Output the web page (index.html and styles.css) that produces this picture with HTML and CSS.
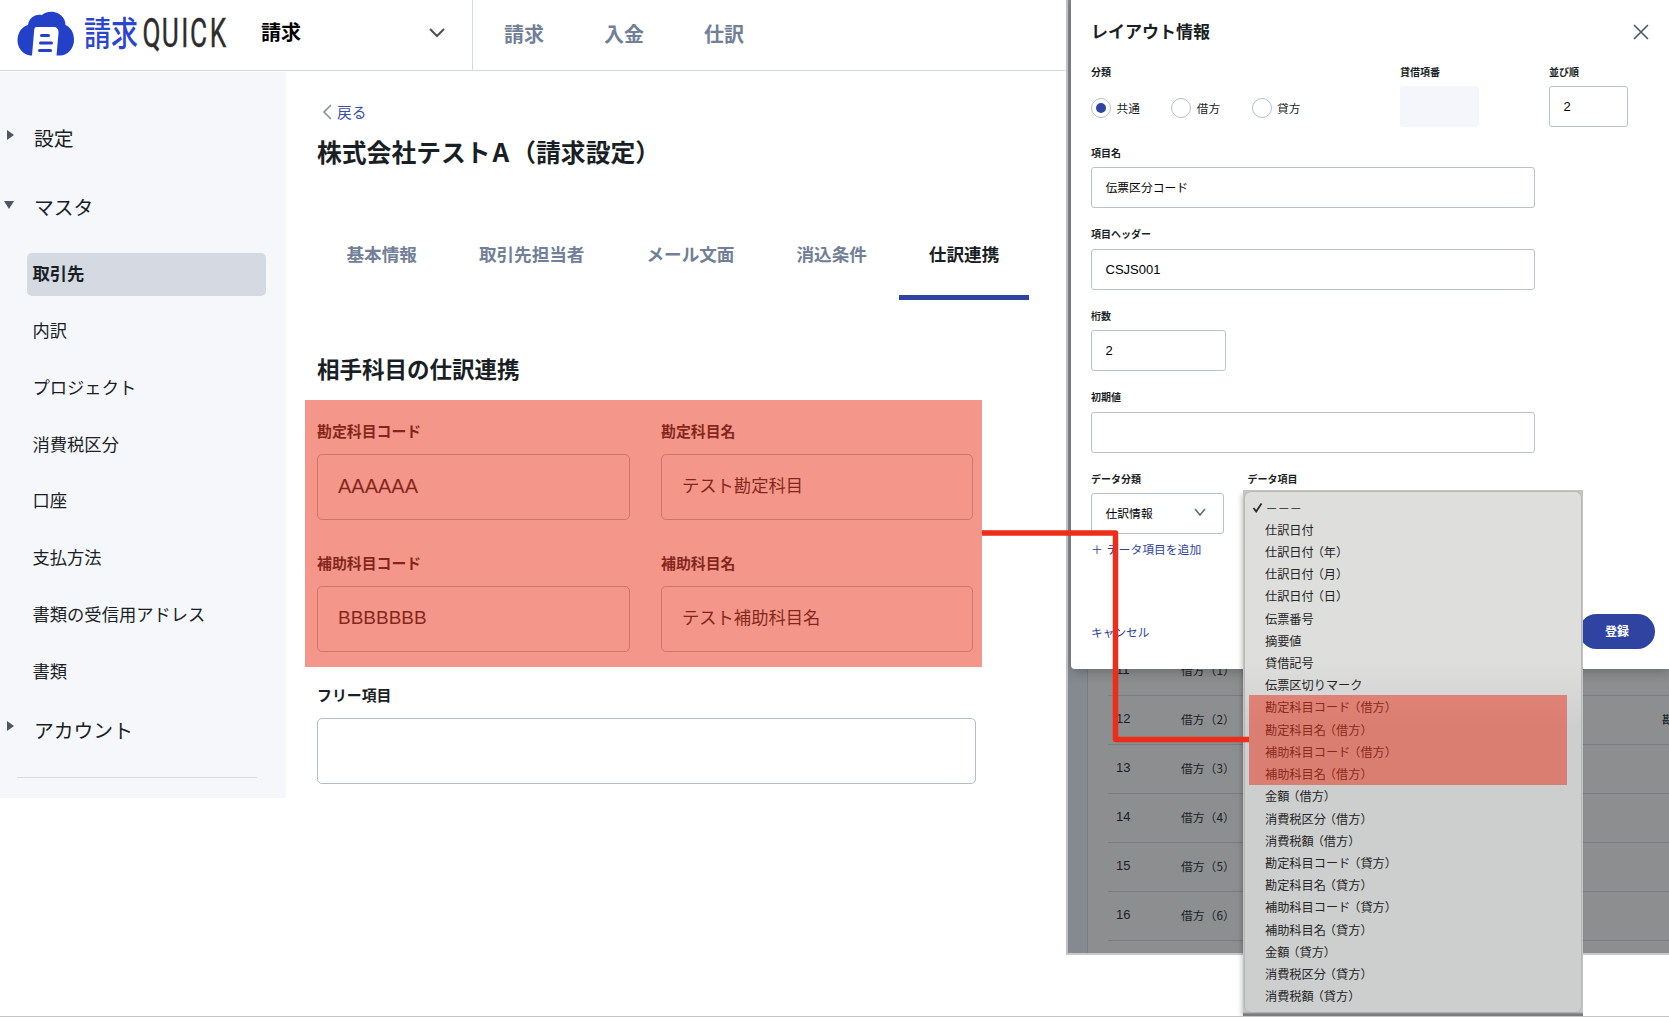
FILE: index.html
```html
<!DOCTYPE html>
<html lang="ja">
<head>
<meta charset="utf-8">
<title>請求QUICK</title>
<link rel="stylesheet" href="styles.css">
</head>
<body>
<div class="canvas">
  <div class="app">
    <header class="header">
      <div class="brand">
        <svg class="logo" width="214" height="46" viewBox="0 0 214 46">
          <path fill="#2340c8" d="M15 44.500H13C5 43 .5 36.500.5 29.500C.5 21.500 5 15.500 11 14C12 7 18 2.500 25 4C31-1 42-.5 47 8C48 10 48.500 12 48.500 14C54 16.500 57 22 57 29C57 37 51 44.500 43 44.500H39.500L41.500 22C41.700 18.500 40 16 37 16H20C18 16 17.400 17 17.200 19Z"/>
          <path stroke="#2340c8" stroke-width="3" stroke-linecap="round" d="M24.500 24.500h7M23.500 32h11M22.500 39.500h11"/>
          <text class="logo-ja" x="67" y="35" textLength="54" lengthAdjust="spacingAndGlyphs">請求</text>
          <text class="logo-en" transform="scale(.64 1)" x="196 226 256.500 270.500 301" y="36">QUICK</text>
        </svg>
        <span class="product">請求</span>
        <svg class="caret" width="16" height="10" viewBox="0 0 16 10"><path d="M1 1l7 7 7-7" fill="none" stroke="#4d5156" stroke-width="2"/></svg>
      </div>
      <nav class="topnav"><span>請求</span><span>入金</span><span>仕訳</span></nav>
    </header>
    <div class="body">
      <aside class="sidebar">
        <div class="group"><i class="tri"></i>設定</div>
        <div class="group open"><i class="tri down"></i>マスタ</div>
        <ul class="menu">
          <li class="active">取引先</li><li>内訳</li><li>プロジェクト</li><li>消費税区分</li><li>口座</li><li>支払方法</li><li>書類の受信用アドレス</li><li>書類</li>
        </ul>
        <div class="group last"><i class="tri"></i>アカウント</div>
        <hr>
      </aside>
      <main class="main">
        <a class="back"><svg width="10" height="16" viewBox="0 0 10 16"><path d="M9 1L2 8l7 7" fill="none" stroke="#8a939c" stroke-width="1.700"/></svg>戻る</a>
        <h1>株式会社テスト<span>A</span>（請求設定）</h1>
        <div class="tabs"><span>基本情報</span><span>取引先担当者</span><span>メール文面</span><span>消込条件</span><span class="on">仕訳連携</span></div>
        <h2>相手科目の仕訳連携</h2>
        <div class="fields">
          <div class="field"><label>勘定科目コード</label><div class="box latin a">AAAAAA</div></div>
          <div class="field"><label>勘定科目名</label><div class="box">テスト勘定科目</div></div>
          <div class="field"><label>補助科目コード</label><div class="box latin">BBBBBBB</div></div>
          <div class="field"><label>補助科目名</label><div class="box">テスト補助科目名</div></div>
          <div class="mark mark-fields"></div>
        </div>
        <div class="field free"><label>フリー項目</label><div class="box"></div></div>
      </main>
    </div>
  </div>

  <div class="window">
    <section class="dialog">
      <div class="dialog-head"><h3>レイアウト情報</h3><svg width="16" height="16" viewBox="0 0 16 16"><path d="M1 1l14 14M15 1L1 15" stroke="#4a5866" stroke-width="1.600"/></svg></div>
      <div class="row-top">
        <div class="item kind"><label>分類</label>
          <div class="radios"><span><i class="radio on"></i>共通</span><span><i class="radio"></i>借方</span><span><i class="radio"></i>貸方</span></div>
        </div>
        <div class="item number"><label>貸借項番</label><div class="input off"></div></div>
        <div class="item order"><label>並び順</label><div class="input num">2</div></div>
      </div>
      <div class="item"><label>項目名</label><div class="input">伝票区分コード</div></div>
      <div class="item"><label>項目ヘッダー</label><div class="input num">CSJS001</div></div>
      <div class="item"><label>桁数</label><div class="input num short">2</div></div>
      <div class="item"><label>初期値</label><div class="input"></div></div>
      <div class="row-data">
        <div class="item"><label>データ分類</label><div class="input select">仕訳情報<svg width="12" height="9" viewBox="0 0 12 9"><path d="M1 1l5 6 5-6" fill="none" stroke="#5b6b7c" stroke-width="1.500"/></svg></div></div>
        <div class="item"><label>データ項目</label></div>
      </div>
      <a class="add"><span>＋</span>データ項目を追加</a>
      <div class="actions"><a>キャンセル</a><button>登録</button></div>
    </section>
    <div class="table">
      <div class="tr first"><span>11</span><span>借方（1）</span></div>
      <div class="tr"><span>12</span><span>借方（2）</span><span class="cut">勘</span></div>
      <div class="tr"><span>13</span><span>借方（3）</span></div>
      <div class="tr"><span>14</span><span>借方（4）</span></div>
      <div class="tr"><span>15</span><span>借方（5）</span></div>
      <div class="tr"><span>16</span><span>借方（6）</span></div>
    </div>
  </div>

  <div class="dropdown">
    <ul class="options">
      <li class="checked"><svg width="11" height="11" viewBox="0 0 11 11"><path d="M1.500 6l2.700 3.500L9.500 1.500" fill="none" stroke="#2b2b2b" stroke-width="1.800"/></svg>－－－</li>
      <li>仕訳日付</li>
      <li>仕訳日付<b>（年）</b></li>
      <li>仕訳日付<b>（月）</b></li>
      <li>仕訳日付<b>（日）</b></li>
      <li>伝票番号</li>
      <li>摘要値</li>
      <li>貸借記号</li>
      <li>伝票区切りマーク</li>
      <li>勘定科目コード<b>（借方）</b></li>
      <li>勘定科目名<b>（借方）</b></li>
      <li>補助科目コード<b>（借方）</b></li>
      <li>補助科目名<b>（借方）</b></li>
      <li>金額<b>（借方）</b></li>
      <li>消費税区分<b>（借方）</b></li>
      <li>消費税額<b>（借方）</b></li>
      <li>勘定科目コード<b>（貸方）</b></li>
      <li>勘定科目名<b>（貸方）</b></li>
      <li>補助科目コード<b>（貸方）</b></li>
      <li>補助科目名<b>（貸方）</b></li>
      <li>金額<b>（貸方）</b></li>
      <li>消費税区分<b>（貸方）</b></li>
      <li>消費税額<b>（貸方）</b></li>
    </ul>
    <div class="mark mark-options"></div>
  </div>

  <svg class="connector" width="268" height="214" viewBox="0 0 268 214"><path d="M0 4H133.500V210.500H267" fill="none" stroke="#eb2d19" stroke-width="5.500" stroke-linejoin="round"/></svg>
</div>
</body>
</html>
```
FILE: styles.css
```css
* { box-sizing: border-box; }
body { margin: 0; background: #fff; color: #1a1f25; font-family: "Noto Sans CJK JP", sans-serif; }
ul, h1, h2, h3 { margin: 0; padding: 0; list-style: none; }
label { display: block; font-weight: 700; }

.canvas { position: relative; display: flex; width: 1669px; height: 1017px; overflow: hidden; border-bottom: 1px solid #c4c4c4; }
.app { width: 1066px; flex: none; }

/* header */
.header { display: flex; height: 71px; border-bottom: 1px solid #d5d9e2; }
.brand { display: flex; align-items: center; width: 473px; padding: 0 27px 0 17px; border-right: 1px solid #d5d9e2; }
.logo { flex: none; margin-bottom: 2px; overflow: visible; }
.logo-ja { font-size: 34px; font-weight: 500; fill: #2a45cf; }
.logo-en { font-family: "Roboto", sans-serif; font-size: 41px; font-weight: 400; fill: #2d2d2d; stroke: #2d2d2d; stroke-width: .4px; }
.product { margin: 0 auto 7px 30px; font-size: 20px; line-height: 28px; font-weight: 700; color: #000; }
.caret { margin-bottom: 5px; }
.topnav { display: flex; align-items: center; gap: 60px; padding: 0 0 2px 31px; font-size: 20px; line-height: 28px; font-weight: 700; color: #718096; }

/* sidebar */
.body { display: flex; padding-top: 1px; }
.sidebar { width: 286px; height: 726px; padding-top: 46px; background: #f5f7fb; }
.group { display: flex; align-items: center; height: 40px; margin-bottom: 28px; padding-left: 7px; font-size: 19.800px; line-height: 40px; }
.group.open { margin: 29px 0 26px; padding-left: 4px; }
.tri { width: 0; height: 0; margin: -7px 20px 0 0; border-left: 7px solid #4a5866; border-top: 5.500px solid transparent; border-bottom: 5.500px solid transparent; }
.tri.down { margin-top: -5px; border: 5px solid transparent; border-top: 8px solid #4a5866; border-bottom: 0; }
.menu { padding-left: 27px; }
.menu li { width: 239px; height: 43px; margin-bottom: 13.850px; padding-left: 5.500px; border-radius: 5px; font-size: 17.300px; line-height: 39px; }
.menu .active { background: #d4d9e2; font-weight: 700; }
.group.last { margin: 16px 0 27px; }
.sidebar hr { width: 240px; height: 1px; margin: 0 0 0 17px; border: 0; background: #d9dbe0; }

/* main column */
.main { width: 780px; padding: 30px 0 0 31px; }
.back { display: flex; align-items: center; gap: 5px; height: 20px; padding-left: 5px; font-size: 14.700px; line-height: 20px; color: #3a4db0; }
h1 { margin-top: 11px; font-size: 24.800px; line-height: 36px; }
h1 span { margin: 0 2px 0 2px; font-size: 26px; }
.tabs { display: flex; gap: 2.500px; margin-top: 61px; }
.tabs span { height: 70px; padding: 13px 30px 0 29.500px; border-bottom: 5px solid transparent; font-size: 17.600px; line-height: 21px; font-weight: 700; color: #718096; }
.tabs .on { border-color: #2f44a0; color: #1a1f25; }
h2 { margin-top: 51px; font-size: 22.500px; line-height: 34px; }
.fields { position: relative; display: grid; grid-template-columns: 313px 312px; column-gap: 31px; row-gap: 32px; margin-top: 35px; }
.field label { height: 22px; margin-bottom: 12px; font-size: 14.900px; line-height: 22px; }
.box { height: 66px; padding-left: 20px; border: 1px solid #b3bccb; border-radius: 5px; font-size: 17.300px; line-height: 60px; }
.box.latin { font-family: "Liberation Sans", sans-serif; font-size: 19px; line-height: 62px; }
.box.a { font-size: 20px; }
.free { width: 659px; margin-top: 32px; }
.mark { position: absolute; background: rgba(234, 45, 22, .5); }
.mark-fields { left: -12px; top: -20px; width: 677px; height: 267px; }

/* layout window */
.window { width: 603px; height: 955px; padding-left: 3px; overflow: hidden; border-left: 2px solid #bfbfbf; border-bottom: 2px solid #c8c8c8; background: linear-gradient(90deg, #858a91 19px, #797c80 19px 20px, #8d8e90 20px); }
.dialog { position: relative; height: 669px; padding: 17px 0 0 20px; border-radius: 0 0 0 4px; background: #fff; box-shadow: 0 3px 12px rgba(0, 0, 0, .25); }
.dialog-head { display: flex; justify-content: space-between; align-items: center; height: 28px; padding-right: 20px; }
h3 { font-size: 17px; line-height: 28px; }
.dialog-head svg { margin-top: 2px; }
.item { width: 444px; height: 81.500px; }
.item label { height: 14px; margin-bottom: 7.500px; font-size: 10px; line-height: 14px; }
.input { height: 41px; padding-left: 13.500px; border: 1px solid #b9c0cf; border-radius: 3px; font-size: 11.800px; line-height: 37px; color: #000; }
.input.num { font-family: "Liberation Sans", sans-serif; font-size: 13px; line-height: 39px; }
.short { width: 135px; }
.row-top { display: flex; margin-top: 20px; }
.row-top .item { height: 80.700px; }
.item.kind { width: 309px; }
.item.number { width: 79px; margin-right: 70px; }
.item.order { width: 79px; }
.row-top .item label { margin-bottom: 7px; }
.input.off { border: 0; background: #f5f6fb; }
.radios { display: flex; padding-top: 12px; font-size: 11.700px; line-height: 20px; }
.radios span { display: flex; width: 80.300px; align-items: center; gap: 5.500px; }
.radio { display: grid; place-items: center; width: 20px; height: 20px; margin-top: -1px; border: 1.500px solid #b5becd; border-radius: 50%; }
.radio.on::after { content: ""; width: 10px; height: 10px; border-radius: 50%; background: #2f44a0; }
.row-data { display: flex; gap: 23.500px; height: 70px; }
.row-data .item { width: 133px; }
.select { display: flex; justify-content: space-between; align-items: center; padding: 0 17px 2px 13.500px; }
.add { display: flex; gap: 4px; margin-top: -2.500px; font-size: 11.800px; line-height: 20px; color: #2f44a0; }
.actions { display: flex; justify-content: space-between; align-items: center; height: 35px; margin-top: 55px; padding-right: 14px; font-size: 11.700px; color: #2f44a0; }
.actions button { width: 76px; height: 35px; padding: 0 0 1px; border: 0; border-radius: 18px; background: #2f44a0; color: #fff; font: 700 12px/20px "Noto Sans CJK JP", sans-serif; }

.table { padding-left: 37px; }
.tr { display: flex; align-items: center; height: 49.100px; padding: 0 0 3px 8px; border-bottom: 1px solid #797c80; font-size: 11.800px; color: #1a1f25; }
.tr span { flex: none; }
.tr span:first-child { width: 65px; font-family: "Liberation Sans", sans-serif; font-size: 13px; }
.tr span:nth-child(2) { width: 481px; }
.tr.first { height: 27px; padding-bottom: 25px; }

/* option list that hangs over the window */
.dropdown { position: absolute; left: 1243px; top: 490px; width: 339.500px; height: 527px; padding: 2px 2px 0; background: linear-gradient(#c4c4c4 0 522px, #7b7c7e 524px); box-shadow: -3px 2px 5px -2px rgba(0, 0, 0, .25); }
.options { height: 520px; padding: 4.500px 0 0 20px; border-radius: 6px; background: linear-gradient(#dededc 170px, #cdcfcf 235px); box-shadow: 0 0 0 .500px #aaa; }
.options li { height: 22.230px; font-size: 12.200px; line-height: 22px; color: #252525; white-space: nowrap; font-feature-settings: "halt"; }
.options b { margin-left: 4px; font-weight: 400; }
.options .checked { display: flex; align-items: center; gap: 3px; margin-left: -13.500px; line-height: 20px; }
.mark-options { left: 6px; top: 205px; width: 318px; height: 90px; }
.connector { position: absolute; left: 982px; top: 529px; }
```
